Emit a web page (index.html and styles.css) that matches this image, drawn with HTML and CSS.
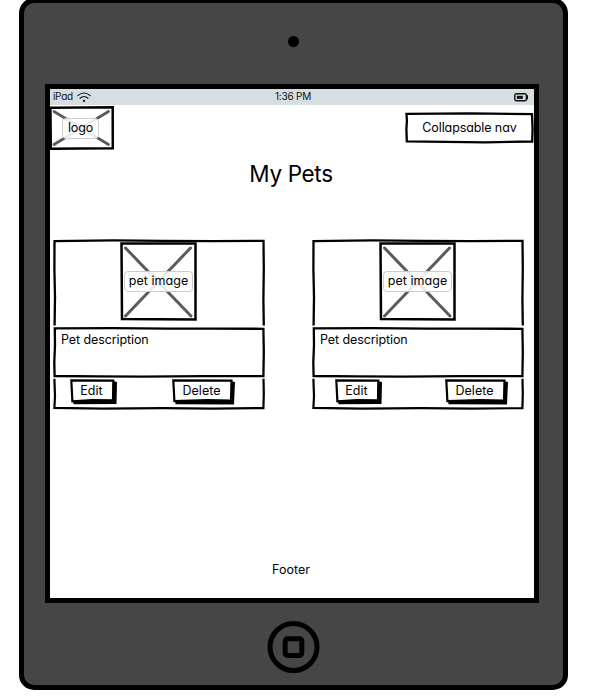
FILE: index.html
```html
<!DOCTYPE html>
<html lang="en">
<head>
<meta charset="utf-8">
<title>My Pets</title>
<link rel="stylesheet" href="styles.css">
</head>
<body>
<svg class="defs" width="0" height="0" aria-hidden="true">
  <symbol id="photo" viewBox="0 0 77 79">
    <path d="M1.5 1.5L75.5 1.5L75.5 77.5L2 77Z" fill="#fff" stroke="#000" stroke-width="2.5"/>
    <path d="M5.5 6L71 74M70.5 6L5.5 74" stroke="#5b5b5b" stroke-width="3" stroke-linecap="round"/>
  </symbol>
  <symbol id="frame-top" viewBox="0 0 212 88">
    <path d="M1.6 86.5L2 58L1.4 30L1.5 2.2L60 1.4L110 1.8L160 2.2L210.5 1.8L210.8 30L210.4 60L210.8 86.5" fill="none" stroke="#000" stroke-width="2.3"/>
  </symbol>
  <symbol id="frame-mid" viewBox="0 0 212 51">
    <path d="M1.8 1.4L60 1.2L115 1.7L160 1.6L210.4 1.8L210.8 25L210.4 49.2L150 49.2L90 49.7L45 49.4L1.6 49L1.3 35L2 18Z" fill="#fff" stroke="#000" stroke-width="2.3"/>
  </symbol>
  <symbol id="frame-low" viewBox="0 0 212 32">
    <path d="M1.4 .8L2 18L1.4 29.9L50 30.6L110 30.1L160 30.7L210.4 30.1L210.8 16L210.5 .8" fill="none" stroke="#000" stroke-width="2.2"/>
  </symbol>
  <symbol id="btn-edit" viewBox="0 0 47 26">
    <path d="M3 21L3.5 25.3L46.5 25L47 3L42 2V21Z"/>
    <path d="M1.3 1.3L43.3 1.6L43 21.4L22 21.2L2.4 22.4Z" fill="#fff" stroke="#000" stroke-width="2.2"/>
  </symbol>
  <symbol id="btn-delete" viewBox="0 0 63 26">
    <path d="M3 21L3.5 25.2L62 25.4L63 3L58 2V21Z"/>
    <path d="M1.3 1.3L59.5 1.6L59 21.6L35 21.2L2.4 22.2Z" fill="#fff" stroke="#000" stroke-width="2.2"/>
  </symbol>
</svg>

<div class="device">
  <div class="camera"></div>
  <div class="screen">
    <div class="status">
      <div class="carrier"><span>iPad</span>
        <svg width="14" height="11" viewBox="0 0 14 11" fill="none" stroke="#111" stroke-width="1.2" stroke-linecap="round"><path d="M.8 3.6Q7-1.6 13.2 3.6M3 6.2Q7 2.8 11 6.2"/><circle cx="7" cy="8.9" r="1.1" fill="#111" stroke="none"/></svg>
      </div>
      <div class="time">1:36 PM</div>
      <svg class="battery" width="15" height="9" viewBox="0 0 15 9"><rect x=".8" y=".8" width="11.6" height="7" rx="1.6" fill="none" stroke="#111" stroke-width="1.4"/><path d="M2.8 2.8H8.8V5.9H2.8Z" fill="#111"/><path d="M12.5 2.3H14V6.3H12.5Z" fill="#111"/></svg>
    </div>
    <header class="top">
      <div class="logo">
        <svg class="sketch" viewBox="0 0 65 44"><path d="M1.4 1.7L63.7 1.3L63.8 42.3L30 42.4L1.8 42.8Z" fill="#fff" stroke="#000" stroke-width="2.5"/><path d="M5 5.5L59.5 38.5M59.5 5.5L5 38.5" stroke="#5b5b5b" stroke-width="2.8" stroke-linecap="round"/></svg>
        <span class="tag">logo</span>
      </div>
      <div class="nav">
        <svg class="sketch" viewBox="0 0 129 32"><path d="M1.5 1.8L65 1.3L127 2.2L127.6 17L127.2 29.5L80 30.4L1.8 29.4L1.4 17L1.9 9Z" fill="#fff" stroke="#000" stroke-width="2.3"/></svg>
        <span class="nav-text">Collapsable nav</span>
      </div>
    </header>
    <h1>My Pets</h1>
    <main class="cards">
      <article class="card">
        <div class="picture"><svg class="sketch"><use href="#frame-top"/></svg>
          <div class="photo"><svg class="sketch"><use href="#photo"/></svg><span class="tag">pet image</span></div>
        </div>
        <div class="about"><svg class="sketch"><use href="#frame-mid"/></svg><span>Pet description</span></div>
        <div class="actions"><svg class="sketch"><use href="#frame-low"/></svg>
          <div class="btn edit"><svg class="sketch"><use href="#btn-edit"/></svg><span>Edit</span></div>
          <div class="btn delete"><svg class="sketch"><use href="#btn-delete"/></svg><span>Delete</span></div>
        </div>
      </article>
      <article class="card wide">
        <div class="picture"><svg class="sketch"><use href="#frame-top"/></svg>
          <div class="photo"><svg class="sketch"><use href="#photo"/></svg><span class="tag">pet image</span></div>
        </div>
        <div class="about"><svg class="sketch"><use href="#frame-mid"/></svg><span>Pet description</span></div>
        <div class="actions"><svg class="sketch"><use href="#frame-low"/></svg>
          <div class="btn edit"><svg class="sketch"><use href="#btn-edit"/></svg><span>Edit</span></div>
          <div class="btn delete"><svg class="sketch"><use href="#btn-delete"/></svg><span>Delete</span></div>
        </div>
      </article>
    </main>
    <footer>Footer</footer>
  </div>
  <svg class="home" width="54" height="54" viewBox="0 0 54 54" fill="none" stroke="#000"><circle cx="26.5" cy="27" r="23.5" stroke-width="5"/><rect x="18.2" y="18.8" width="16.6" height="16.6" rx="2.2" stroke-width="5"/></svg>
</div>
</body>
</html>
```
FILE: styles.css
```css
* { box-sizing: border-box; }
body {
  margin: 0;
  width: 590px;
  height: 700px;
  overflow: hidden;
  background: #fff;
  color: #000;
  font: 12.5px/16px Inter, "Liberation Sans", sans-serif;
  font-feature-settings: "cv11";
}
svg { display: block; }
.defs { position: absolute; }
.device {
  display: flex;
  flex-direction: column;
  align-items: center;
  width: 549px;
  height: 692px;
  margin: -2px 0 0 19px;
  border: 5px solid #000;
  border-radius: 15px;
  background: #464646;
}
.camera {
  flex: none;
  width: 11px;
  height: 11px;
  margin-top: 33px;
  border-radius: 50%;
  background: #000;
}
.screen {
  flex: none;
  display: flex;
  flex-direction: column;
  width: 494px;
  height: 519px;
  margin: 37px 3px 0 0;
  border: 5px solid #000;
  background: #fff;
}
.status {
  display: grid;
  grid-template-columns: 1fr auto 1fr;
  align-items: center;
  height: 16px;
  padding: 0 5px 0 3px;
  background: #d7dee1;
  font-size: 10px;
  line-height: 14px;
  color: #111;
}
.carrier { display: flex; align-items: center; gap: 4px; }
.carrier span { letter-spacing: -.3px; padding-bottom: 2px; }
.time { letter-spacing: -.2px; padding: 0 0 2px 4px; }
.battery { justify-self: end; }
.top {
  display: flex;
  justify-content: space-between;
  align-items: flex-start;
  margin: 1px 0 0 -1px;
}
.sketch {
  position: absolute;
  inset: 0;
  width: 100%;
  height: 100%;
}
.logo, .nav, .picture, .about, .actions, .photo, .btn { position: relative; }
.logo, .nav, .photo, .btn { display: flex; align-items: center; justify-content: center; }
.logo { width: 65px; height: 44px; padding-right: 2px; }
.nav { width: 129px; height: 32px; margin-top: 6px; padding-bottom: 1px; }
.nav-text { letter-spacing: -.1px; }
.nav-text, .tag, .about span, .btn span { position: relative; white-space: nowrap; }
.tag {
  padding: 1px 4px 2px;
  border: 1px solid #ccc;
  border-radius: 4px;
  background: rgba(255, 255, 255, .88);
}
.logo .tag { padding: 1px 5px 2px; letter-spacing: -.2px; }
h1 {
  margin: 10px 2px 0 0;
  font-size: 22.5px;
  line-height: 28px;
  letter-spacing: -.35px;
  font-weight: 400;
  text-align: center;
}
.cards { display: flex; gap: 47px; margin: 51px 0 0 3px; }
.card { width: 212px; }
.picture { height: 88px; padding: 3px 0 0 67px; }
.photo { width: 77px; height: 79px; padding-bottom: 1px; }
.photo .tag { letter-spacing: .05px; }
.about { height: 51px; padding: 5px 8px; letter-spacing: -.1px; }
.actions { display: flex; height: 32px; padding: 1px 0 0 17px; gap: 55px; }
.wide .actions { padding-left: 23px; gap: 63px; }
.btn { height: 26px; padding: 0 4px 2px 0; }
.edit { width: 47px; }
.delete { width: 63px; }
footer { margin: 152px 2px 0 0; text-align: center; }
.home { flex: none; margin-top: 17px; }
```
